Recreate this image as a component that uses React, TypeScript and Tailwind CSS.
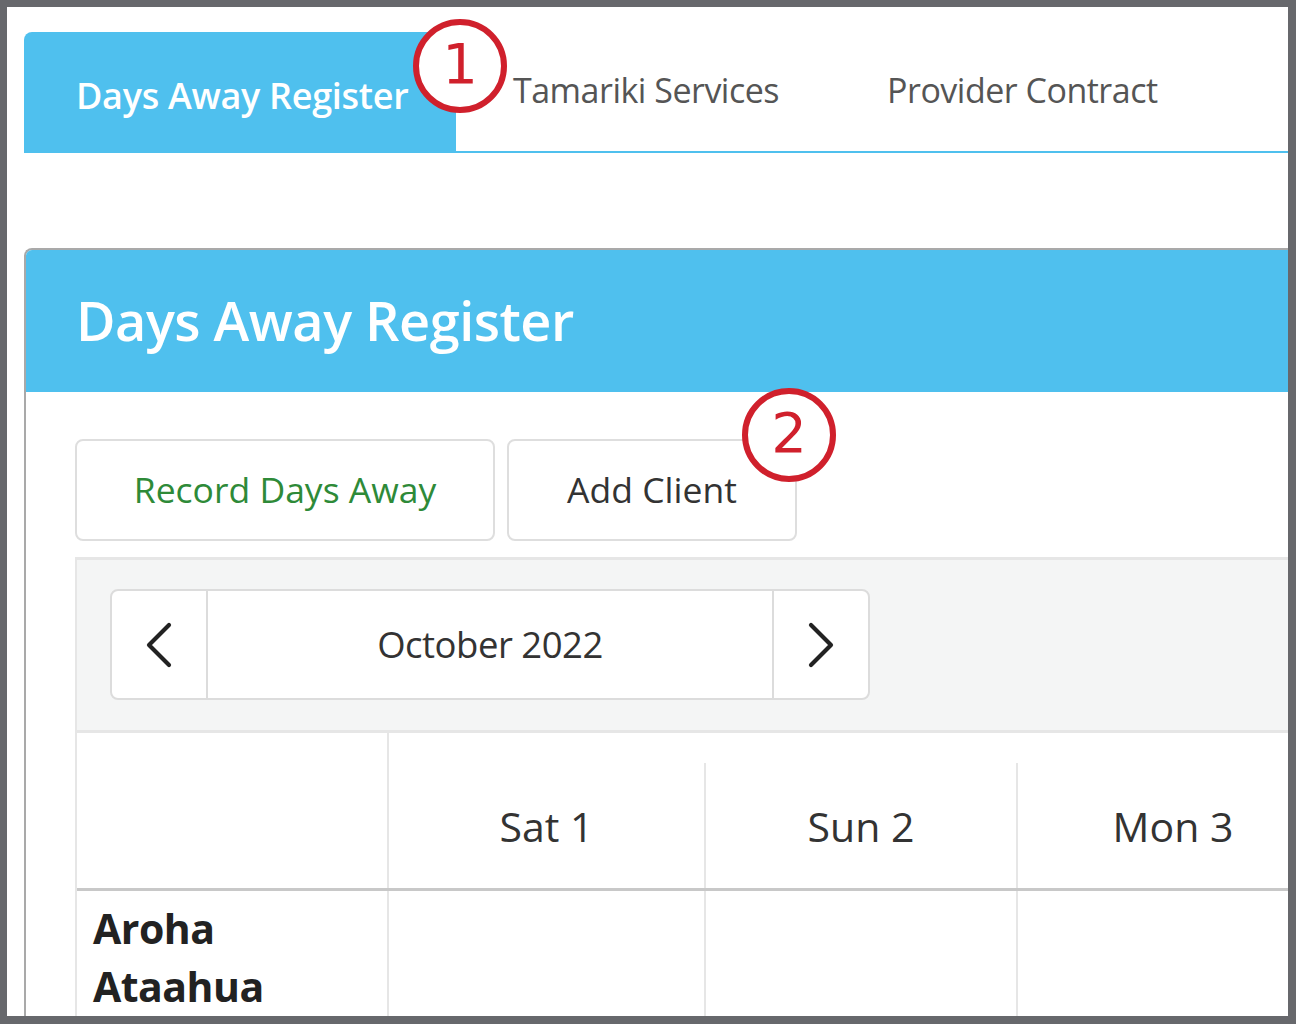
import React from "react";

const sans = { fontFamily: '"Open Sans", "Noto Sans", sans-serif' };

function Marker({ n, className }: { n: string; className: string }) {
  return (
    <div
      className={`absolute w-[94px] h-[94px] rounded-full border-[6px] border-[#d0202c] bg-white flex items-center justify-center text-[#d0202c] text-[56px] leading-none ${className}`}
      style={{ fontFamily: '"DejaVu Sans", sans-serif' }}
    >
      <span className="-mt-[4px]">{n}</span>
    </div>
  );
}

function Chevron({ dir }: { dir: "left" | "right" }) {
  return (
    <svg width="30" height="46" viewBox="0 0 30 46" fill="none">
      <path
        d={dir === "left" ? "M25 3 L5 23 L25 43" : "M5 3 L25 23 L5 43"}
        stroke="#222"
        strokeWidth="4.2"
        strokeLinecap="round"
        strokeLinejoin="round"
      />
    </svg>
  );
}

export default function App() {
  return (
    <div className="w-[1296px] h-[1024px] bg-[#67686c] pl-[7px] pt-[7px] pr-[8px] pb-[8px] overflow-hidden" style={sans}>
      <div className="relative w-full h-full bg-white overflow-hidden">
        <div className="pl-[17px] pt-[25px]">
          {/* Tabs */}
          <div className="flex h-[121px] border-b-2 border-[#4fc0ee]">
            <div className="w-[432px] -mb-[2px] h-[121px] bg-[#4fc0ee] rounded-tl-[8px] flex items-center pl-[52px] pt-[6px] text-white text-[36px] font-semibold tracking-[-0.3px]">
              Days Away Register
            </div>
            <div className="flex items-center pb-[2px] pl-[57px] gap-[108px] text-[#555] text-[34px] tracking-[-0.5px]">
              <span>Tamariki Services</span>
              <span>Provider Contract</span>
            </div>
          </div>

          {/* Panel */}
          <div className="mt-[95px] border-l-2 border-t-2 border-[#a9a9a9] rounded-tl-[8px]">
            <div className="h-[142px] bg-[#4fc0ee] rounded-tl-[6px] flex items-center pl-[50px] pb-[2px] text-white text-[54px] font-semibold tracking-[-0.5px]">
              Days Away Register
            </div>
            <div className="pl-[49px] pt-[47px]">
              <div className="flex gap-[12px]">
                <div className="w-[420px] h-[102px] border-2 border-[#dedede] rounded-[8px] flex items-center justify-center text-[#2e8a38] text-[35.5px]">
                  Record Days Away
                </div>
                <div className="w-[290px] h-[102px] border-2 border-[#dedede] rounded-[8px] flex items-center justify-center text-[#333] text-[35.5px]">
                  Add Client
                </div>
              </div>

              {/* Toolbar */}
              <div className="mt-[16px] bg-[#f4f5f5] border-t-[3px] border-l-2 border-b-[3px] border-[#e6e6e6] h-[176px] pl-[33px] pt-[29px]">
                <div className="w-[760px] h-[111px] bg-white border-2 border-[#dcdcdc] rounded-[8px] flex">
                  <div className="w-[96px] border-r-2 border-[#dcdcdc] flex items-center justify-center">
                    <Chevron dir="left" />
                  </div>
                  <div className="flex-1 flex items-center justify-center text-[#333] text-[36.5px] tracking-[-0.5px]">
                    October 2022
                  </div>
                  <div className="w-[96px] border-l-2 border-[#dcdcdc] flex items-center justify-center">
                    <Chevron dir="right" />
                  </div>
                </div>
              </div>

              {/* Table */}
              <div className="border-l-2 border-[#e6e6e6]">
                <div className="flex h-[158px] border-b-[3px] border-[#c8c8c8]">
                  <div className="w-[312px] shrink-0 border-r-2 border-[#e6e6e6]" />
                  <div className="w-[315px] shrink-0 flex items-center justify-center pt-[32px] text-[#333] text-[41px]">
                    Sat 1
                  </div>
                  <div className="w-[312px] shrink-0 mt-[30px] pt-[2px] border-l-2 border-[#e6e6e6] flex items-center justify-center text-[#333] text-[41px]">
                    Sun 2
                  </div>
                  <div className="w-[312px] shrink-0 mt-[30px] pt-[2px] border-l-2 border-[#e6e6e6] flex items-center justify-center text-[#333] text-[41px]">
                    Mon 3
                  </div>
                </div>
                <div className="flex h-[140px]">
                  <div className="w-[312px] shrink-0 border-r-2 border-[#e6e6e6] pl-[16px] pt-[8px] text-[#222] text-[41px] font-bold leading-[58px] tracking-[-0.5px]">
                    Aroha
                    <br />
                    Ataahua
                  </div>
                  <div className="w-[315px] shrink-0" />
                  <div className="w-[312px] shrink-0 border-l-2 border-[#e6e6e6]" />
                  <div className="w-[312px] shrink-0 border-l-2 border-[#e6e6e6]" />
                </div>
              </div>
            </div>
          </div>
        </div>

        <Marker n="1" className="left-[406px] top-[12px]" />
        <Marker n="2" className="left-[735px] top-[381px]" />
      </div>
    </div>
  );
}
